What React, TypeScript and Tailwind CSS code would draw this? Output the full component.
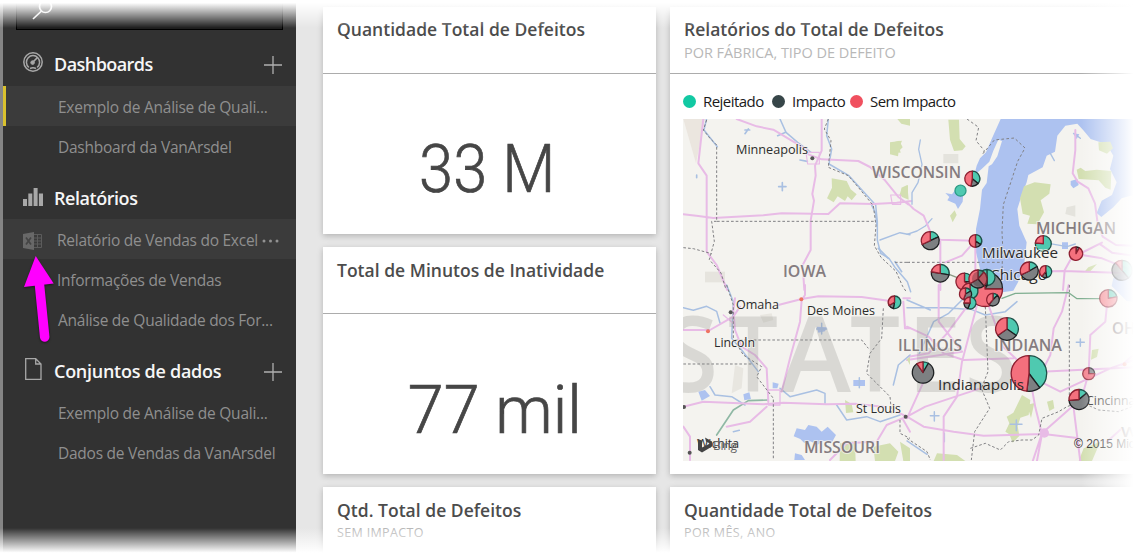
import React from "react";

type Slice = [number, "g" | "d" | "r"];
const SLICE: Record<string, string> = { g: "#4fc9b0", d: "#7d8082", r: "#f4707d" };
const INK: Record<string, string> = { g: "#1d4f47", d: "#1d2022", r: "#8d1f30" };

function Pie({ x, y, r, s, o = 1 }: { x: number; y: number; r: number; s: Slice[]; o?: number }) {
  let from = 0;
  const at = (deg: number) => {
    const a = ((deg - 90) * Math.PI) / 180;
    return `${(x + r * Math.cos(a)).toFixed(2)} ${(y + r * Math.sin(a)).toFixed(2)}`;
  };
  return (
    <g opacity={o} strokeWidth={1.3} strokeLinejoin="round">
      {s.map(([to, c], i) => {
        const start = from;
        from = to;
        if (to - start >= 360) return <circle key={i} cx={x} cy={y} r={r} fill={SLICE[c]} stroke="#2b9c86" />;
        return (
          <path
            key={i}
            d={`M${x} ${y}L${at(start)}A${r} ${r} 0 ${to - start > 180 ? 1 : 0} 1 ${at(to)}Z`}
            fill={SLICE[c]}
            stroke={INK[c]}
          />
        );
      })}
    </g>
  );
}

function Label({ x, y, w, size = 14, state = false, children }: { x: number; y: number; w: number; size?: number; state?: boolean; children: string }) {
  return (
    <text
      x={x}
      y={y}
      textLength={w}
      lengthAdjust="spacingAndGlyphs"
      fontSize={size}
      fontWeight={state ? 600 : 500}
      fill={state ? "#857c80" : "#2c2c2c"}
      stroke="#f5f4f0"
      strokeOpacity={0.7}
      strokeWidth={2}
      paintOrder="stroke"
      fontFamily='"Open Sans", "Noto Sans", sans-serif'
    >
      {children}
    </text>
  );
}

const ROAD = "#e8bbe6";
const RIVER = "#a9c0e2";
const BORDER = "#808083";

function DefectMap() {
  return (
    <svg className="block h-[342px] w-[454px]" viewBox="683 119 454 342">
      <rect x="683" y="119" width="454" height="342" fill="#f4f3ef" />
      <g transform="translate(880 119) scale(.33333)" fill="#d3dfb1">
        <path d="M362 0L335 60 318 100 300 118 290 140 283 168 305 150 328 128 340 95 355 62 366 66 352 112 336 136 326 142 320 192 306 212 300 270 288 330 288 400 300 450 330 490 350 522 400 515 414 490 432 440 440 370 418 320 412 270 424 232 440 190 445 168 488 145 500 110 525 98 532 50 556 20 592 14 610 34 632 60 680 76 700 110 690 150 710 190 696 228 665 245 650 282 664 294 700 265 725 238 771 225V0Z" fill="#adc2f0" />
        <path d="M700 478l71-50v122l-31-4-45-45z" fill="#c3d2f3" />
        <path d="M205 2h32l2 58 18 22-10 12-25 2-12-34zM30 70l36-5-8 20 4 16-32-2zM432 202l32-12 48 6-4 28-26 20 10 36-20 36-30-2 8-24-22-6-8-46zM590 152l12-6 14 10 34-4 44 4-2 56-16-6-20-22-60-4zM655 70l36-2 8 20-18 16-24-10zM64 206l18-8 4 44-20-8zM210 290l14-16 6 14-12 22zM625 445l26-10-20 22-18 2z" />
        <path d="M190 105h45v28h-45zM560 265l26-6v34l-30-8z" fill="#e4e3dd" />
        <path d="M196 222l20 4 10-14 10 12 14-2-2 26-14 22-8-16-24-10 6-10zM572 186l20-6 4 18-16 10-8-10zM578 42l20 4-8 14zM546 370h18v20h-18z" fill="#adc2f0" />
      </g>
      <g transform="translate(680 115) scale(.33333)" fill="none" strokeLinecap="round" strokeLinejoin="round">
        <path d="M10 12H75L48 145Z" fill="#ebe6df" />
        <path d="M75 470h60v32H75z" fill="#e6e4de" />
        <path d="M455 190l45 8 12 25 18 15-15 18-12-12-8 14-22-14-12 18-20-12 15-32zM630 85l28-8 10 20-12 12-2 15-24-6zM652 12h38v20l-26-6zM664 222l20-12v38l-26-6z" fill="#d3dfb1" />
        <path d="M80 10L72 45 112 95M300 12l18 40 35 30 40 30M445 12l-5 50 15 40-8 45 60 35 45 50 35 38 5 50 0 55 10 40 25 15 20 30 35 40 10 30M600 375l60-22 30 6" stroke={RIVER} strokeWidth="4.5" />
        <path d="M205 42l-10 14M195 45h14M50 180v8M307 203v24M296 215h22M293 62l24-10M360 135l22 4M575 270l12 25 4 35M595 400l30 30M645 440l20 30" stroke={RIVER} strokeWidth="5" />
        <path d="M70 12L55 145 80 182V410L110 450 142 525M10 298l45 5 45 6 150-8 55-6 140 2 35-32 100 2 70-4 45-5M170 12l60 22 50 10 50 30 50 30M425 12v95l-20 45 2 30-10 55 5 20-10 60V405L368 450l5 75M385 118l40 15 110 5 35 18 45 40 40 50 30 22" stroke={ROAD} strokeWidth="6" />
        <path d="M378 112h40v35h-35zM632 240h30v28h-25z" stroke={ROAD} strokeWidth="3.5" />
        <path d="M80 15L70 45l20 25 20 20V319H583M445 12l-12 30 20 35-8 80 60 25 30 35 45 55 8 60-5 60 20 35 45 42 20 45 10 15M110 319H95l8 60-15 55 35 40 15 50M10 398l30 3 55 15M645 442h45" stroke={BORDER} strokeWidth="3" strokeDasharray="8 6" strokeLinecap="butt" />
        <circle cx="397" cy="130" r="6" fill="#555" />
      </g>
      <g transform="translate(907 115) scale(.33333)" fill="none" strokeLinecap="round" strokeLinejoin="round">
        <path d="M40 75l-5 28 10 45-12 55-18 30 0 35M0 358l30-10 25-15 20-22M430 115l12 22M425 385l55 10 25-8M500 55l20 15" stroke={RIVER} strokeWidth="4" />
        <path d="M0 262l20 20 30 20 25 60 25 12 105 3-40 45-50 20M205 385v90M505 45v60l-8 70 15 25 32 20 20 45 8 60 15 40 40 25 50 2M585 383l-50 25-40 18-22 40-5 59M350 470l120-2 180 6M580 388l35 25 55 8M525 420l60 10 80 32M100 380v145" stroke={ROAD} strokeWidth="6" />
        <path d="M180 12l35 25-8 40 25 30-5 10 35-42 60-6 32 30-22 40-18 55-25 75-4 80 2 45-2 80M0 442h285" stroke={BORDER} strokeWidth="3" strokeDasharray="8 7" strokeLinecap="butt" />
        <path d="M105 470l90 35" stroke="#8a9a84" strokeWidth="4" />
      </g>
      <g transform="translate(907 285) scale(.33333)" fill="none" strokeLinecap="round" strokeLinejoin="round">
        <path d="M345 330l25 15-5 45-25 8-8 25 5 30-20 20-10-25-12-8 12-25-8-20 20-12zM420 350l18-5 4 25-15 8zM360 360l22-6-10 45zM90 505l60 5 25 18H80zM530 490l50-20-25 58h-40zM555 195l20-4-5 25-18 8z" fill="#d3dfb1" />
        <path d="M0 68h120l60 5M180 30l-55 55-45 25-45 100M185 70l50 20 60-10 35-30M0 45l70 30M0 468l60 40M508 172h24M520 162v22M70 392h26M82 380v28M310 418h35M328 405v32M112 445v25" stroke={RIVER} strokeWidth="4.5" />
        <path d="M95 0v110l70 90L0 225M0 125l65 30 45 50 60 20 150-5M210 60l-45 170-15 105-40 60V525M180 65l-60 80-55 60-60 10M245 62l45 125 75 70 20 110 20 80-15 80M0 395l50 30 90 15 90 12 180-5 100 12M0 395l55-30 90-30 75-25M50 290l-50 110M372 262l310-15M400 290l60 30 150-70 70-25M600 60l-5 50-45 40-5 115-20 70-30 30-90 80-30 90M500 370l20 160M485 0l-20 80-25 50-10 80-25 50M645 240l45-40M600 470l45-40" stroke={ROAD} strokeWidth="6" />
        <path d="M235 65l8 195 -20 50 25 60-45 70-10 85M487 0v345M0 460l60 40 10 25M190 490l45-15 45 20 25-25 40-5 30 0 20-15 10-50 50-20 25-15 40-15 55 25 60 5 40-15 30 20" stroke={BORDER} strokeWidth="3" strokeDasharray="8 6" strokeLinecap="butt" />
        <path d="M285 40l40-15 160-2 25 18h70" stroke="#7fae90" strokeWidth="4" />
        <circle cx="412" cy="444" r="14" fill={ROAD} />
        <circle cx="653" cy="238" r="6" fill="#ee8373" />
      </g>
      <g transform="translate(680 285) scale(.33333)" fill="none" strokeLinecap="round" strokeLinejoin="round">
        <path d="M495 345l20 12 5 25-22 2zM480 475l45-6 2 59h-48zM580 485l50-10 25 25-10 28h-60zM660 470l30 20v38h-20zM680 222l10-6v24z" fill="#d3dfb1" />
        <path d="M165 240l25 10-5 60-30 15zM240 90l35-5 5 20-30 8z" fill="#e8e6e0" />
        <path d="M350 430l25 5 10-15 25 5 15 15 18-15 25 25-12 22-25-5-18 12-22-10-18 5-12-12-20-8zM345 505l20 5 10 15h-32zM520 285h35v18h-35zM410 125l30 2-5 12-20 4zM55 320l20-5 15 18-25 14zM190 328l18-6 5 20-20 4zM278 292l18 4-4 14-14 0z" fill="#adc2f0" />
        <path d="M10 68l30 8 40-12 30 15 10 35M300 310l30 25 80-20 25 10v30M90 305l15 25 50 5 40 25M140 0l20 50-5 110 30 35 50 65M640 300l15-60 35-30M470 360l30 45 60-10 40 15 60-20M425 115v32M410 132h30M538 278v30M160 440l18-4" stroke={RIVER} strokeWidth="4.5" />
        <path d="M110 450l50-75 45-28 60-2" stroke="#8fb8a4" strokeWidth="5" />
        <path d="M10 135h80l70-40 20-30M165 40l-5 35 5 60 20 50 40 25 35 40 5 100M375 0v30l-10 15-5 65-30 110-25 100M295 60l70-18 50-8 130 2 85 12M10 365l60-15 180 8 60-5 130 5 85-2 90 10M260 365l-50 45-70 15M10 425l20 30v70M670 40l20 0M670 50l5 80 15 0M590 470l30-50 60-25-30-15M450 525l50-50 80-5M670 405l20 35" stroke={ROAD} strokeWidth="6" />
        <path d="M265 315h35v45h-35zM130 90l30 25" stroke={ROAD} strokeWidth="4" />
        <path d="M140 0l20 60v100l30 50 55 35-15 30 50 65v185M165 165h380l20 25M10 237h205M610 70l-5 90-35 45-10 60 30 30 40 40 5 50M660 405l0 40 30 15M630 60l30 0" stroke={BORDER} strokeWidth="3" strokeDasharray="8 6" strokeLinecap="butt" />
        <circle cx="152" cy="82" r="6" fill="#555" />
        <circle cx="677" cy="395" r="6" fill="#555" />
        <circle cx="29" cy="503" r="6" fill="#555" />
        <circle cx="12" cy="366" r="6" fill="#555" />
        <circle cx="364" cy="43" r="6" fill="#ee7362" />
        <circle cx="84" cy="139" r="6" fill="#ee7362" />
      </g>
      <g fontFamily='"Open Sans", "Noto Sans", sans-serif' fontWeight={600} fontSize={105} fill="#8c8c88" opacity={0.25}>
        <text x="664" y="392" textLength="54" lengthAdjust="spacingAndGlyphs">S</text>
        <text x="728" y="392" textLength="50" lengthAdjust="spacingAndGlyphs">T</text>
        <text x="780" y="392" textLength="71" lengthAdjust="spacingAndGlyphs">A</text>
        <text x="850" y="392" textLength="50" lengthAdjust="spacingAndGlyphs">T</text>
        <text x="908" y="392" textLength="53" lengthAdjust="spacingAndGlyphs">E</text>
        <text x="965" y="392" textLength="52" lengthAdjust="spacingAndGlyphs">S</text>
      </g>
      <Label x={736} y={154} w={72} size={13.5}>Minneapolis</Label>
      <Label x={872} y={178} w={89} size={15.5} state>WISCONSIN</Label>
      <Label x={783} y={277} w={43} size={15.5} state>IOWA</Label>
      <Label x={1036} y={234} w={80} size={15.5} state>MICHIGAN</Label>
      <Label x={990} y={280} w={57} size={15}>Chicago</Label>
      <Label x={736} y={309} w={43} size={13}>Omaha</Label>
      <Label x={807} y={315} w={68} size={13}>Des Moines</Label>
      <Label x={714} y={347} w={41} size={13}>Lincoln</Label>
      <Label x={898} y={351} w={64} size={15.5} state>ILLINOIS</Label>
      <Label x={994} y={351} w={68} size={15.5} state>INDIANA</Label>
      <Label x={1086} y={405} w={57} size={13}>Cincinnati</Label>
      <Label x={1112} y={334} w={40} size={17} state>OHIO</Label>
      <Label x={1121} y={437} w={17} size={15} state>W</Label>
      <Label x={856} y={413} w={45} size={13}>St Louis</Label>
      <Label x={804} y={453} w={76} size={15.5} state>MISSOURI</Label>
      <Label x={697} y={448} w={42} size={13}>Wichita</Label>
      <path d="M698 439l4 1.500v7l8-4-4-2-1-4 7 4v5l-10 6-4-2.500z" fill="#444" />
      <text x="713" y="450" fontSize="12" fill="#666" textLength="24" fontFamily='"Open Sans", sans-serif'>Bing</text>
      <text x="1074" y="448" fontSize="12" fill="#222" fontFamily='"Liberation Sans", Arial, sans-serif'>© 2015 Microsoft</text>

      <Pie x={972.3} y={178.7} r={7.5} s={[[130, "g"], [190, "d"], [360, "r"]]} />
      <Pie x={960.5} y={190.7} r={5.5} s={[[360, "g"]]} />
      <Pie x={930.3} y={240.7} r={9} s={[[65, "g"], [245, "d"], [360, "r"]]} />
      <Pie x={975.5} y={241} r={6.3} s={[[125, "g"], [180, "d"], [360, "r"]]} />
      <Pie x={1043.3} y={243.7} r={8} s={[[275, "g"], [360, "r"]]} />
      <Pie x={1076} y={253.7} r={6.7} s={[[30, "d"], [360, "r"]]} />
      <Pie x={940.2} y={273.3} r={9} s={[[100, "g"], [280, "d"], [360, "r"]]} />
      <Pie x={1029.3} y={271} r={9} s={[[60, "g"], [245, "d"], [360, "r"]]} />
      <Pie x={1045.7} y={271.7} r={6} s={[[170, "g"], [220, "d"], [360, "r"]]} />
      <Pie x={1122} y={270.3} r={10} s={[[140, "g"], [320, "d"], [360, "r"]]} o={0.75} />
      <Pie x={985} y={289} r={17.5} s={[[30, "g"], [90, "d"], [360, "r"]]} />
      <Pie x={964.5} y={281.7} r={8.5} s={[[90, "g"], [130, "d"], [360, "r"]]} />
      <Pie x={970} y={291} r={8} s={[[200, "g"], [360, "r"]]} />
      <Pie x={987} y={277.5} r={8} s={[[180, "g"], [220, "d"], [359, "g"]]} />
      <Pie x={978} y={279} r={9} s={[[40, "g"], [140, "r"], [240, "d"], [360, "r"]]} />
      <circle cx="980" cy="279" r="8" fill="#4a2a30" opacity=".35" />
      <Pie x={965.5} y={294} r={6} s={[[60, "g"], [200, "d"], [360, "r"]]} />
      <Pie x={970} y={303} r={6} s={[[200, "g"], [270, "d"], [360, "r"]]} />
      <Pie x={993} y={299.7} r={6.3} s={[[45, "g"], [220, "d"], [360, "r"]]} />
      <Pie x={894.5} y={302.3} r={6.3} s={[[190, "g"], [240, "d"], [360, "r"]]} />
      <Pie x={1007} y={329} r={11.3} s={[[125, "g"], [235, "d"], [360, "r"]]} />
      <Pie x={1029} y={373.5} r={17.8} s={[[143, "g"], [187, "d"], [360, "r"]]} />
      <Pie x={923} y={372.5} r={10.7} s={[[30, "g"], [325, "d"], [360, "r"]]} />
      <Pie x={1088.7} y={373.7} r={6} s={[[90, "d"], [360, "r"]]} o={0.85} />
      <Pie x={1079} y={399.5} r={10} s={[[50, "g"], [265, "d"], [360, "r"]]} />
      <Pie x={1108.3} y={298.3} r={8.7} s={[[80, "g"], [360, "r"]]} o={0.8} />
      <Label x={982} y={258} w={76} size={15}>Milwaukee</Label>
      <text x="938" y="390" textLength="86" lengthAdjust="spacingAndGlyphs" fontSize="14.500" fontWeight={500} fill="#2c2c2c" fontFamily='"Open Sans", "Noto Sans", sans-serif'>
        Indianapolis
      </text>
    </svg>
  );
}

function Plus() {
  return (
    <svg className="mr-3.5 h-[18px] w-[18px]" viewBox="0 0 18 18" stroke="#b0b0b0" strokeWidth="1.300">
      <path d="M9 0v18M0 9h18" />
    </svg>
  );
}

function Header({ icon, plus, track, children }: { icon: React.ReactNode; plus?: boolean; track: string; children: string }) {
  return (
    <div className="flex h-[42px] shrink-0 items-center">
      <span className="flex w-[51px] items-center pl-5">{icon}</span>
      <span className={`flex-1 pb-0.5 whitespace-nowrap text-[18px] font-semibold text-[#f6f6f6] ${track}`}>{children}</span>
      {plus && <Plus />}
    </div>
  );
}

function Item({ pad = "pl-[55px]", active, mark, children }: { pad?: string; active?: boolean; mark?: boolean; children: React.ReactNode }) {
  return (
    <div
      className={`flex h-10 shrink-0 items-center whitespace-nowrap pt-[3px] text-[15.5px] tracking-[-0.25px] text-[#8f8f8f] ${active ? "bg-[#3b3b3b]" : ""} ${mark ? "border-l-[3px] border-[#d9c12e] pl-[52px]" : pad}`}
    >
      {children}
    </div>
  );
}

function Card({ title, sub, subClass = "", top = "pt-[11px]", className = "", children }: { title: string; sub?: string; subClass?: string; top?: string; className?: string; children?: React.ReactNode }) {
  return (
    <section className={`flex shrink-0 flex-col bg-white shadow-[0_2px_6px_rgba(0,0,0,0.22)] ${className}`}>
      <div className={`h-[66px] shrink-0 px-3.5 ${top}`}>
        <h2 className="whitespace-nowrap text-[17.5px] leading-6 font-semibold tracking-[0.02px] text-[#4c4c4c]">{title}</h2>
        {sub && <p className={`whitespace-nowrap text-[#b8b8b8] ${subClass}`}>{sub}</p>}
      </div>
      {children}
    </section>
  );
}

function Key({ color, children, gap }: { color: string; children: string; gap: string }) {
  return (
    <span className={`flex items-center gap-[7px] ${gap}`}>
      <i className={`h-[13px] w-[13px] rounded-full ${color}`} />
      <span className="text-[15px] tracking-[-0.55px] whitespace-nowrap text-[#1a1a1a]">{children}</span>
    </span>
  );
}

export default function App() {
  return (
    <div className="relative flex h-[556px] w-[1137px] overflow-hidden bg-[#e6e6e6] font-['Open_Sans','Noto_Sans',sans-serif]">
      <nav className="flex w-[296px] shrink-0 flex-col border-l-[3px] border-[#858585] bg-[#323232]">
        <div className="mx-[13px] mb-[14px] h-[30px] shrink-0 border border-t-0 border-black bg-[#1d1d1d]">
          <svg className="ml-[14px] h-5 w-6" viewBox="0 0 24 20" fill="none" stroke="#f0f0f0" strokeWidth="1.700">
            <circle cx="14.500" cy="6.500" r="6" />
            <path d="M10.500 11L2 19" />
          </svg>
        </div>
        <Header
          plus
          track="tracking-[-0.55px]"
          icon={
            <svg className="mb-1.5 h-5 w-5" viewBox="0 0 20 20" fill="none" stroke="#a8a8a8">
              <circle cx="10" cy="10" r="9.200" strokeWidth="1.500" />
              <path d="M5.800 15.300A6.600 6.600 0 1 1 14.200 15.300" strokeWidth="1.500" />
              <path d="M7 16.500q3-1.500 6 0M9.500 10.500L14.500 5.500" strokeWidth="1.700" />
              <circle cx="9.600" cy="10.600" r="1.800" fill="#a8a8a8" />
            </svg>
          }
        >
          Dashboards
        </Header>
        <Item active mark>Exemplo de Análise de Quali...</Item>
        <Item>Dashboard da VanArsdel</Item>
        <div className="h-[12px] shrink-0" />
        <Header
          track="tracking-[-0.45px]"
          icon={
            <svg className="mb-1 h-5 w-5" viewBox="0 0 20 20" fill="#a8a8a8">
              <path d="M0 12h4v7H0zM5.300 6.500h4V19h-4zM10.600 1h4v18h-4zM15.900 6.500H20V19h-4.100z" />
            </svg>
          }
        >
          Relatórios
        </Header>
        <div className="-mt-px shrink-0">
          <Item active pad="pl-5">
            <svg className="mr-[15px] h-5 w-[19px] shrink-0" viewBox="0 0 19 20">
              <path d="M0 3L11 1v18L0 17z" fill="#686868" />
              <path d="M3 6.500l5 7M8 6.500l-5 7" stroke="#444" strokeWidth="1.700" />
              <path d="M11 3.500h7.500v13H11M11 7h7M11 10h7M11 13h7M14.500 4v12" fill="none" stroke="#5c5c5c" />
            </svg>
            Relatório de Vendas do Excel
            <svg className="ml-1 h-1 w-[18px]" viewBox="0 0 18 4" fill="#929292">
              <circle cx="2" cy="2" r="1.500" />
              <circle cx="8.500" cy="2" r="1.500" />
              <circle cx="15" cy="2" r="1.500" />
            </svg>
          </Item>
        </div>
        <Item pad="pl-[54px]">Informações de Vendas</Item>
        <Item>Análise de Qualidade dos For...</Item>
        <div className="h-3 shrink-0" />
        <Header
          plus
          track="tracking-[-0.27px]"
          icon={
            <svg className="mb-1.5 ml-[2px] h-[22px] w-[17px]" viewBox="0 0 17 22" fill="none" stroke="#a8a8a8" strokeWidth="1.300">
              <path d="M.7.700h10l5.300 5.300v15.300H.7zM10.700.700V6H16" />
            </svg>
          }
        >
          Conjuntos de dados
        </Header>
        <div className="-mt-px shrink-0">
          <Item>Exemplo de Análise de Quali...</Item>
          <Item>Dados de Vendas da VanArsdel</Item>
        </div>
      </nav>

      <main className="flex flex-1 gap-3.5 pt-[7px] pl-[27px]">
        <div className="flex w-[333px] shrink-0 flex-col gap-[13px]">
          <Card title="Quantidade Total de Defeitos" top="pt-2.5" className="h-[227px]">
            <div className="flex flex-1 justify-center border-t border-[#acacac] pt-[61px] pr-[5px] font-['Roboto',sans-serif] text-[66px] leading-[70px] font-light text-[#464646] [-webkit-text-stroke:0.7px_#464646]">
              <span className="scale-x-[0.93]">33 M</span>
            </div>
          </Card>
          <Card title="Total de Minutos de Inatividade" className="h-[227px]">
            <div className="flex flex-1 justify-center border-t border-[#acacac] pt-[62px] pl-2.5 font-['Roboto',sans-serif] text-[66px] leading-[70px] font-light text-[#464646] [-webkit-text-stroke:0.7px_#464646]">
              <span className="scale-x-[0.98]">77 mil</span>
            </div>
          </Card>
          <Card title="Qtd. Total de Defeitos" sub="SEM IMPACTO" subClass="text-[12.5px] leading-[22px] tracking-[0.35px]" className="h-20" />
        </div>
        <div className="flex w-[480px] shrink-0 flex-col gap-[13px]">
          <Card title="Relatórios do Total de Defeitos" top="pt-2.5" sub="POR FÁBRICA, TIPO DE DEFEITO" subClass="text-[14.5px] leading-[23px] tracking-[-0.05px]" className="h-[467px]">
            <div className="flex flex-1 flex-col border-t border-[#acacac] pl-[13px]">
              <div className="flex h-[45px] items-center pt-[9px]">
                <Key color="bg-[#12c9a3]" gap="w-[89px]">Rejeitado</Key>
                <Key color="bg-[#374649]" gap="w-[78px]">Impacto</Key>
                <Key color="bg-[#f0505f]" gap="">Sem Impacto</Key>
              </div>
              <DefectMap />
            </div>
          </Card>
          <Card title="Quantidade Total de Defeitos" sub="POR MÊS, ANO" subClass="text-[12.5px] leading-[22px] tracking-[0.4px]" className="h-20" />
        </div>
      </main>

      <div className="pointer-events-none absolute inset-x-0 top-0 h-[28px] bg-linear-to-b from-white from-10% to-transparent" />
      <div className="pointer-events-none absolute inset-x-0 bottom-0 h-[28px] bg-linear-to-t from-white from-12% to-transparent" />
      <div className="pointer-events-none absolute inset-y-0 right-0 w-[56px] bg-linear-to-l from-white from-6% to-transparent" />
      <svg className="pointer-events-none absolute top-[250px] left-[18px] h-24 w-10 drop-shadow-[0_1px_1px_rgba(0,0,0,0.5)]" viewBox="18 250 40 96">
        <path d="M39.500 285L44.700 337" stroke="#ff00ff" strokeWidth="9.500" strokeLinecap="round" />
        <path d="M35.700 256L53.700 283.500 24 287z" fill="#ff00ff" />
      </svg>
    </div>
  );
}
